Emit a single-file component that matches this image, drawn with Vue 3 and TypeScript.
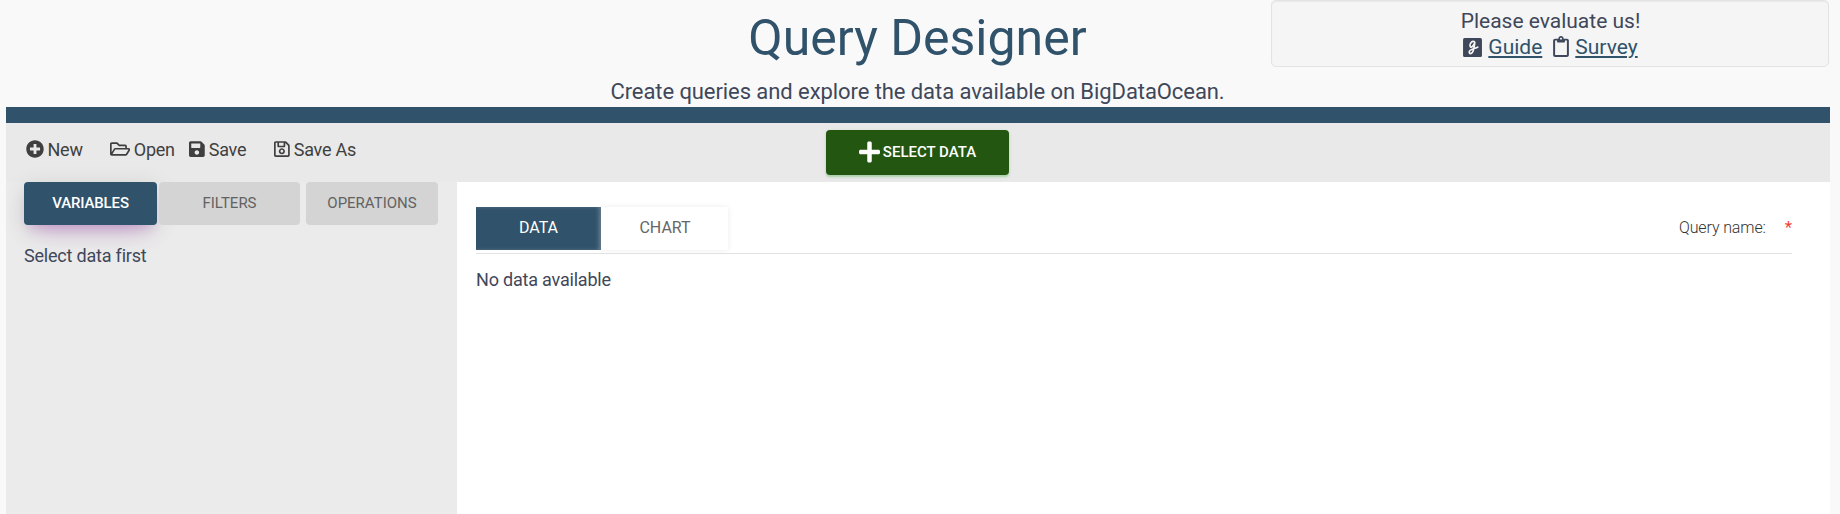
<script setup lang="ts">
import { ref } from 'vue'

interface ToolAction {
  key: string
  label: string
  viewBox: string
  path: string
  width: number
}

const actions: ToolAction[] = [
  {
    key: 'new',
    label: 'New',
    viewBox: '0 0 512 512',
    width: 18,
    path: 'M256 8C119 8 8 119 8 256s111 248 248 248 248-111 248-248S393 8 256 8zm144 276c0 6.600-5.400 12-12 12h-92v92c0 6.600-5.400 12-12 12h-56c-6.600 0-12-5.400-12-12v-92h-92c-6.600 0-12-5.400-12-12v-56c0-6.600 5.400-12 12-12h92v-92c0-6.600 5.400-12 12-12h56c6.600 0 12 5.400 12 12v92h92c6.600 0 12 5.400 12 12v56z',
  },
  {
    key: 'open',
    label: 'Open',
    viewBox: '0 0 576 512',
    width: 20.25,
    path: 'M527.900 224H480v-48c0-26.500-21.500-48-48-48H272l-64-64H48C21.500 64 0 85.500 0 112v288c0 26.500 21.500 48 48 48h400c16.500 0 31.900-8.500 40.700-22.600l79.900-128c20-31.900-3-73.400-40.700-73.400zM48 118c0-3.300 2.700-6 6-6h134.100l64 64H426c3.300 0 6 2.700 6 6v42H152c-16.800 0-32.400 8.800-41.100 23.200L48 351.400zm400 282H72l77.200-128H528z',
  },
  {
    key: 'save',
    label: 'Save',
    viewBox: '0 0 448 512',
    width: 15.75,
    path: 'M433.941 129.941l-83.882-83.882A48 48 0 0 0 316.118 32H48C21.490 32 0 53.490 0 80v352c0 26.510 21.490 48 48 48h352c26.510 0 48-21.490 48-48V163.882a48 48 0 0 0-14.059-33.941zM224 416c-35.346 0-64-28.654-64-64 0-35.346 28.654-64 64-64s64 28.654 64 64c0 35.346-28.654 64-64 64zm96-304.520V212c0 6.627-5.373 12-12 12H76c-6.627 0-12-5.373-12-12V108c0-6.627 5.373-12 12-12h228.520c3.183 0 6.235 1.264 8.485 3.515l3.480 3.480A11.996 11.996 0 0 1 320 111.480z',
  },
  {
    key: 'save-as',
    label: 'Save As',
    viewBox: '0 0 448 512',
    width: 15.75,
    path: 'M433.941 129.941l-83.882-83.882A48 48 0 0 0 316.118 32H48C21.490 32 0 53.490 0 80v352c0 26.510 21.490 48 48 48h352c26.510 0 48-21.490 48-48V163.882a48 48 0 0 0-14.059-33.941zM272 80v80H144V80h128zm122 352H54a6 6 0 0 1-6-6V86a6 6 0 0 1 6-6h42v104c0 13.255 10.745 24 24 24h176c13.255 0 24-10.745 24-24V83.882l78.243 78.243a6 6 0 0 1 1.757 4.243V426a6 6 0 0 1-6 6zM224 232c-48.523 0-88 39.477-88 88s39.477 88 88 88 88-39.477 88-88-39.477-88-88-88zm0 128c-22.056 0-40-17.944-40-40s17.944-40 40-40 40 17.944 40 40-17.944 40-40 40z',
  },
]

const sideTabs = ['Variables', 'Filters', 'Operations']
const viewTabs = ['Data', 'Chart']
const sideTab = ref('Variables')
const viewTab = ref('Data')
</script>

<template>
  <div class="page">
    <header class="header">
      <div class="heading">
        <h1 class="title">Query Designer</h1>
        <p class="subtitle">Create queries and explore the data available on BigDataOcean.</p>
      </div>
      <aside class="well">
        <div class="well-line"><span>Please evaluate us!</span></div>
        <div class="well-line well-links">
          <svg class="ico-guide" viewBox="0 0 18 20">
            <rect x="0" y="1" width="18" height="18" rx="1.500" fill="currentColor" />
            <path
              d="M11 4.800C10.300 3.800 8.900 3.900 7.900 5C6.700 6.300 6.200 8.400 7 9.300C8 10.200 10 8.800 11.200 5.200C10.800 8.500 10.300 12 9.200 14.200C8.200 16.200 6.200 16.200 5.900 14.800C5.700 13.300 7.600 11.900 9.800 11.200C11.600 10.700 13 10.500 14 9.600"
              fill="none"
              stroke="#f5f5f5"
              stroke-width="1.600"
              stroke-linecap="round"
              stroke-linejoin="round"
            />
          </svg>
          <a class="link guide">Guide</a>
          <svg class="ico-survey" viewBox="0 0 384 512">
            <path
              fill="currentColor"
              d="M336 64h-80c0-35.300-28.700-64-64-64s-64 28.700-64 64H48C21.500 64 0 85.500 0 112v352c0 26.500 21.500 48 48 48h288c26.500 0 48-21.500 48-48V112c0-26.500-21.500-48-48-48zM192 40c13.300 0 24 10.700 24 24s-10.700 24-24 24-24-10.700-24-24 10.700-24 24-24zm144 418c0 3.300-2.700 6-6 6H54c-3.300 0-6-2.700-6-6V118c0-3.300 2.700-6 6-6h42v36c0 6.600 5.400 12 12 12h168c6.600 0 12-5.400 12-12v-36h42c3.300 0 6 2.700 6 6z"
            />
          </svg>
          <a class="link">Survey</a>
        </div>
      </aside>
    </header>

    <div class="band"></div>

    <nav class="toolbar">
      <div class="actions">
        <div v-for="a in actions" :key="a.key" class="action" :class="a.key">
          <svg :viewBox="a.viewBox" :width="a.width" height="18">
            <path :d="a.path" fill="currentColor" />
          </svg>
          <span>{{ a.label }}</span>
        </div>
      </div>
      <button class="select-data" type="button">
        <svg viewBox="0 0 448 512" width="21" height="24">
          <path
            fill="currentColor"
            d="M416 208H272V64c0-17.670-14.330-32-32-32h-32c-17.670 0-32 14.330-32 32v144H32c-17.670 0-32 14.330-32 32v32c0 17.670 14.330 32 32 32h144v144c0 17.670 14.330 32 32 32h32c17.670 0 32-14.330 32-32V304h144c17.670 0 32-14.330 32-32v-32c0-17.670-14.330-32-32-32z"
          />
        </svg>
        <span>SELECT DATA</span>
      </button>
    </nav>

    <div class="body">
      <section class="side">
        <div class="side-tabs">
          <button
            v-for="t in sideTabs"
            :key="t"
            type="button"
            class="side-tab"
            :class="[t.toLowerCase(), { active: sideTab === t }]"
            @click="sideTab = t"
          >
            {{ t.toUpperCase() }}
          </button>
        </div>
        <p class="side-note">Select data first</p>
      </section>

      <main class="content">
        <div class="content-head">
          <div class="view-tabs">
            <button
              v-for="t in viewTabs"
              :key="t"
              type="button"
              class="view-tab"
              :class="{ active: viewTab === t }"
              @click="viewTab = t"
            >
              {{ t.toUpperCase() }}
            </button>
          </div>
          <div class="query-name">
            <span>Query name:</span>
            <span class="required">*</span>
          </div>
        </div>
        <p class="empty">No data available</p>
      </main>
    </div>
  </div>
</template>

<style>
body {
  background: #f9f9f9;
  overflow: hidden;
}
</style>

<style scoped>
.page {
  box-sizing: border-box;
  height: 514px;
  padding: 0 10px 0 6px;
  display: flex;
  flex-direction: column;
  font-family: Roboto, 'Liberation Sans', sans-serif;
  color: #3f475a;
  white-space: nowrap;
}
.header {
  height: 107px;
  display: grid;
  grid-template-columns: 558px 1fr 558px;
  padding-right: 1px;
}
.heading {
  grid-column: 2;
  display: flex;
  flex-direction: column;
  align-items: center;
}
.title {
  margin: 8px 0 0;
  font-size: 50px;
  line-height: 60px;
  font-weight: 400;
  color: #30526a;
}
.subtitle {
  margin: 10px 0 0;
  font-size: 22px;
  line-height: 28px;
  letter-spacing: -0.075px;
}
.well {
  grid-column: 3;
  box-sizing: border-box;
  height: 67px;
  padding: 7px 0 0 1px;
  border: 1px solid #e3e3e3;
  border-radius: 5px;
  background: #f5f5f5;
  box-shadow: inset 0 1px 1px rgba(0, 0, 0, 0.05);
  font-size: 21px;
}
.well-line {
  height: 26px;
  line-height: 26px;
  display: flex;
  justify-content: center;
  align-items: center;
}
.ico-guide {
  width: 19px;
  height: 21px;
  margin-right: 6px;
}
.ico-survey {
  width: 16px;
  height: 21px;
  margin: 0 6px 2px 11px;
}
.link {
  color: #30526a;
  text-decoration: underline;
  text-decoration-thickness: 2px;
  text-underline-offset: 2px;
}
.band {
  height: 16px;
  background: #30526a;
}
.toolbar {
  height: 59px;
  background: #e9e9e9;
  display: grid;
  grid-template-columns: 820px 1fr;
}
.actions {
  display: flex;
  padding: 14px 0 0 19.5px;
}
.action {
  height: 24px;
  display: flex;
  align-items: center;
  gap: 4px;
  font-size: 18px;
  letter-spacing: -0.25px;
  color: #3f3f40;
}
.new {
  width: 84px;
}
.open {
  width: 79.5px;
}
.save {
  width: 85px;
}
button {
  border: 0;
  margin: 0;
  padding: 0;
  font-family: inherit;
  font-size: 15px;
}
.select-data {
  width: 183px;
  height: 45px;
  margin-top: 7px;
  border-radius: 4px;
  background: #235610;
  color: #fff;
  font-weight: 500;
  display: flex;
  justify-content: center;
  align-items: center;
  gap: 3px;
  padding-bottom: 2px;
  box-shadow: 0 2px 2px rgba(76, 175, 80, 0.35), 0 1px 5px rgba(76, 175, 80, 0.12);
}
.body {
  flex: 1;
  display: flex;
}
.side {
  width: 451px;
  background: #ebebeb;
}
.side-tabs {
  display: flex;
  padding-left: 18px;
}
.side-tab {
  height: 43px;
  padding-bottom: 2px;
  border-radius: 4px;
  background: #d4d4d4;
  color: #626262;
}
.variables {
  width: 133px;
}
.filters {
  width: 141px;
  margin-left: 2px;
}
.operations {
  width: 132px;
  margin-left: 6px;
}
.side-tab.active {
  background: #30526a;
  color: #fff;
  font-weight: 500;
  letter-spacing: -0.15px;
  box-shadow: 0 14px 26px -12px rgba(156, 39, 176, 0.35), 0 4px 23px rgba(0, 0, 0, 0.1),
    0 8px 10px -5px rgba(156, 39, 176, 0.2);
}
.side-note,
.empty {
  margin: 0;
  font-size: 18px;
  line-height: 24px;
  letter-spacing: -0.2px;
}
.side-note {
  padding: 19px 0 0 18px;
}
.content {
  flex: 1;
  background: #fff;
  padding: 25px 38px 0 19px;
}
.content-head {
  height: 46px;
  display: flex;
  justify-content: space-between;
  border-bottom: 1px solid #e3e3e3;
}
.view-tabs {
  display: flex;
}
.view-tab {
  width: 127px;
  height: 43px;
  padding: 0 0 2px 1px;
  font-size: 16px;
  background: #fff;
  color: #666;
  box-shadow: 0 0 6px rgba(0, 0, 0, 0.08);
}
.view-tab.active {
  width: 125px;
  padding-left: 0;
  background: #30526a;
  color: #fff;
  box-shadow: inset -3px 0 4px -1px rgba(255, 255, 255, 0.3);
}
.query-name {
  display: flex;
  font-size: 16px;
  font-weight: 300;
  letter-spacing: -0.12px;
  line-height: 42px;
  color: #333;
}
.required {
  margin-left: 19px;
  font-size: 17px;
  font-weight: 400;
  line-height: 40px;
  color: #f44336;
}
.empty {
  padding-top: 14px;
}
</style>
